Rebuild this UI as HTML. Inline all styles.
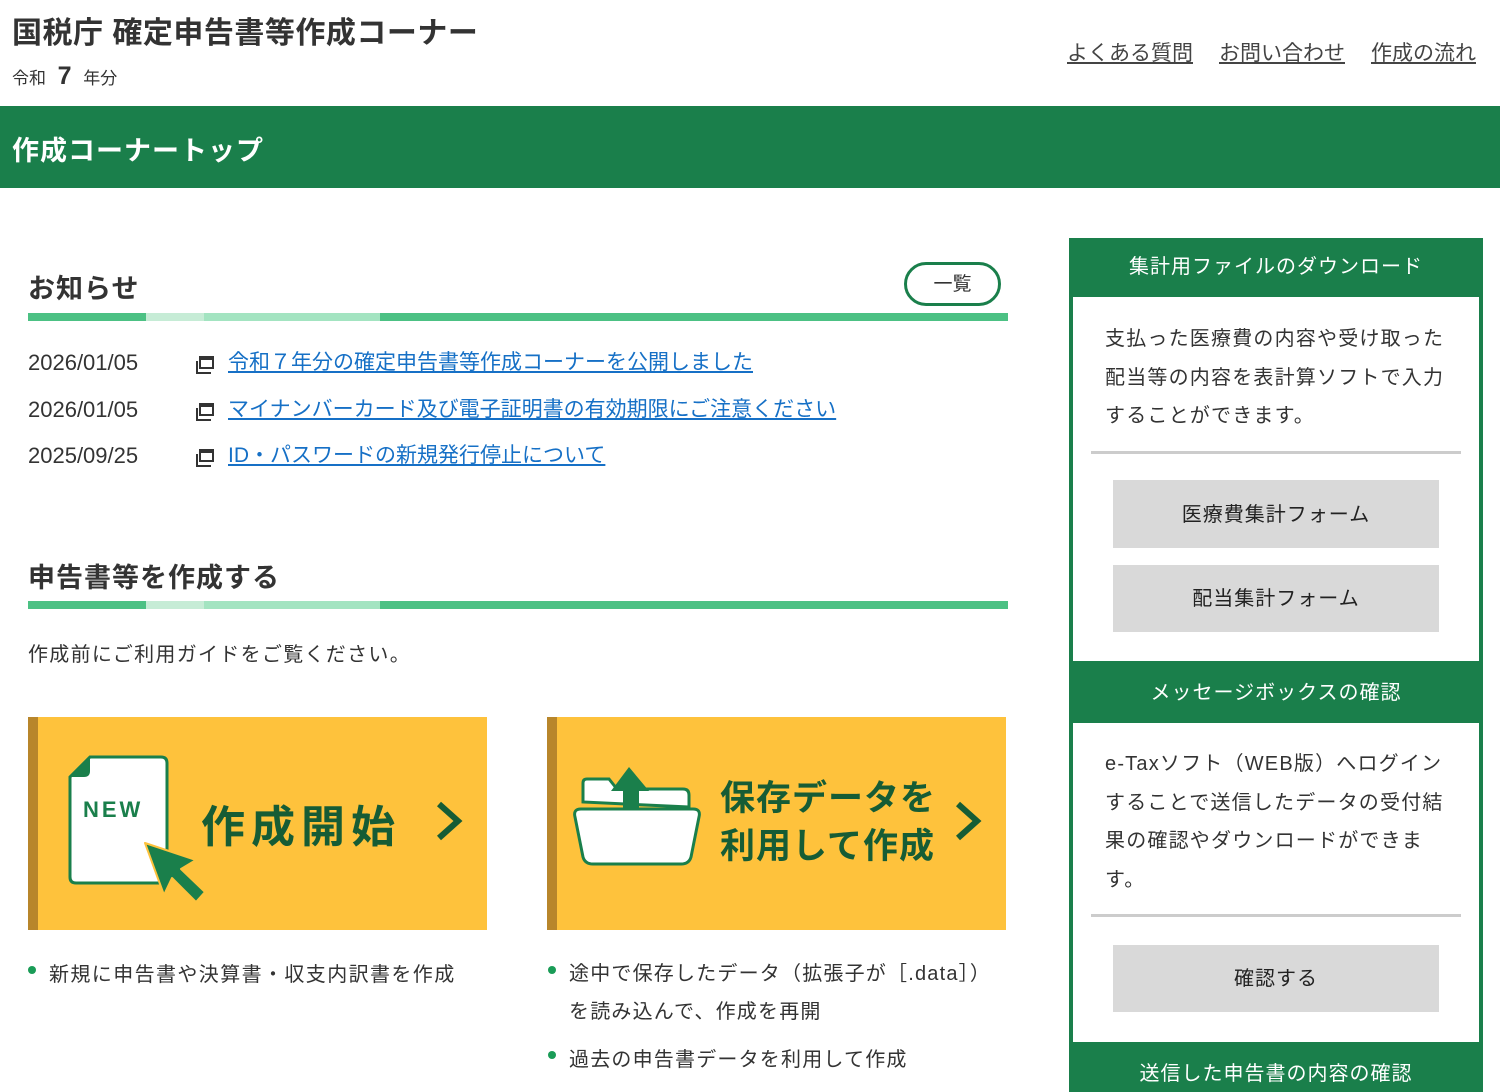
<!DOCTYPE html>
<html><head><meta charset="utf-8"><style>
*{margin:0;padding:0;box-sizing:border-box}
html,body{width:1500px;height:1092px;overflow:hidden}
body{background:#fff;font-family:"Liberation Sans","Noto Sans CJK JP",sans-serif;color:#333;position:relative}
.a{position:absolute;white-space:nowrap}
.bar{position:absolute;height:8px;left:28px;width:980px;background:linear-gradient(90deg,#4cc184 0 118px,#c6ecd6 118px 176px,#a3e4c1 176px 352px,#4cc184 352px)}
.news{font-size:21px;line-height:28px}
.news a{color:#1670c6;text-decoration:underline}
.ico{position:absolute;width:15px;height:13px;border:2px solid #333;border-top-width:4px;background:#fff}
.ico:before{content:"";position:absolute;left:-5px;top:1px;width:13px;height:11px;border-left:2px solid #333;border-bottom:2px solid #333}
.card{position:absolute;top:717px;width:459px;height:213px;background:#fec23c;border-left:10px solid #b8862b}
.side{position:absolute;left:1069px;top:238px;width:414px;height:860px;border:4px solid #1a7f4b;border-top:0}
.sh{position:absolute;left:1069px;width:414px;background:#1a7f4b;color:#fff;font-size:20px;text-align:center;letter-spacing:1px}
.btn{position:absolute;left:1113px;width:326px;background:#d9d9d9;font-size:20px;text-align:center;color:#222;letter-spacing:1px}
.hr{position:absolute;left:1091px;width:370px;height:3px;background:#ccc}
.st{position:absolute;left:1105px;font-size:20px;line-height:38.5px;color:#333;letter-spacing:1.2px}
.dot{position:absolute;width:8px;height:8px;border-radius:50%;background:#1a9c57}
</style></head><body>
<div class="a" style="left:12px;top:8px;font-size:30px;font-weight:bold;color:#333;letter-spacing:0.5px">国税庁 確定申告書等作成コーナー</div>
<div class="a" style="left:12px;top:62px;font-size:17px">令和 <span style="font-size:25px;font-weight:bold">&nbsp;7&nbsp;</span> 年分</div>
<div class="a" style="left:1067px;top:37px;font-size:21px;color:#444"><u>よくある質問</u><span style="display:inline-block;width:26px"></span><u>お問い合わせ</u><span style="display:inline-block;width:26px"></span><u>作成の流れ</u></div>
<div class="a" style="left:0;top:106px;width:1500px;height:82px;background:#1a7f4b"></div>
<div class="a" style="left:12px;top:129px;font-size:27px;font-weight:bold;color:#fff;letter-spacing:1px">作成コーナートップ</div>

<div class="a" style="left:28px;top:267px;font-size:27px;font-weight:bold;letter-spacing:1px">お知らせ</div>
<div class="a" style="left:904px;top:262px;width:97px;height:44px;border:3px solid #1a7f4b;border-radius:22px;font-size:19px;text-align:center;line-height:40px">一覧</div>
<div class="bar" style="top:313px"></div>
<div class="a news" style="left:28px;top:349px;font-size:22px">2026/01/05</div>
<div class="ico" style="left:199px;top:356px"></div>
<div class="a news" style="left:228px;top:349px"><a>令和７年分の確定申告書等作成コーナーを公開しました</a></div>
<div class="a news" style="left:28px;top:396px;font-size:22px">2026/01/05</div>
<div class="ico" style="left:199px;top:403px"></div>
<div class="a news" style="left:228px;top:396px"><a>マイナンバーカード及び電子証明書の有効期限にご注意ください</a></div>
<div class="a news" style="left:28px;top:442px;font-size:22px">2025/09/25</div>
<div class="ico" style="left:199px;top:449px"></div>
<div class="a news" style="left:228px;top:442px"><a>ID・パスワードの新規発行停止について</a></div>

<div class="a" style="left:28px;top:556px;font-size:27px;font-weight:bold;letter-spacing:1px">申告書等を作成する</div>
<div class="bar" style="top:601px"></div>
<div class="a" style="left:28px;top:638px;font-size:20px;letter-spacing:1.3px">作成前にご利用ガイドをご覧ください。</div>

<div class="card" style="left:28px">
<svg style="position:absolute;left:28px;top:36px" width="160" height="160" viewBox="0 0 160 160">
<path d="M24 4 H95 Q101 4 101 10 V124 Q101 130 95 130 H10 Q4 130 4 124 V24 Z" fill="#fff" stroke="#1a7f4b" stroke-width="3"/>
<path d="M24 4 V18 Q24 24 18 24 H4 Z" fill="#1a7f4b"/>
<text x="17" y="64" font-family="Liberation Sans,sans-serif" font-weight="bold" font-size="22" fill="#1a7f4b" letter-spacing="3">NEW</text>
<path d="M79 90 L130 107 L115 116 L139 139 L130 149 L106 125 L98 142 Z" fill="#1a7f4b" stroke="#fec23c" stroke-width="2" stroke-linejoin="round"/>
</svg>
<div class="a" style="left:163px;top:74px;font-size:44px;font-weight:bold;color:#165c35;letter-spacing:6px">作成開始</div>
<svg style="position:absolute;left:396px;top:84px" width="30" height="40" viewBox="0 0 30 40"><path d="M5 3 L24 20 L5 37" fill="none" stroke="#165c35" stroke-width="6"/></svg>
</div>
<div class="card" style="left:547px">
<svg style="position:absolute;left:14px;top:50px" width="135" height="100" viewBox="0 0 135 100">
<path d="M12 35 V16 Q12 12 16 12 H38 L46 22 H112 Q118 22 118 28 V40 Z" fill="#fff" stroke="#1a7f4b" stroke-width="3"/>
<path d="M4 50 Q2 42 10 42 H122 Q130 42 128 50 L120 90 Q118 97 110 97 H22 Q14 97 12 90 Z" fill="#fff" stroke="#1a7f4b" stroke-width="3"/>
<path d="M58 0 L78 24 H68 V42 H52 V24 H40 Z" fill="#1a7f4b"/>
</svg>
<div class="a" style="left:163px;top:58px;font-size:35px;font-weight:bold;color:#165c35;line-height:48px;letter-spacing:1px">保存データを<br>利用して作成</div>
<div style="position:absolute;left:396px;top:84px"><svg width="30" height="40" viewBox="0 0 30 40"><path d="M5 3 L24 20 L5 37" fill="none" stroke="#165c35" stroke-width="6"/></svg></div>
</div>

<div class="dot" style="left:28px;top:966px"></div>
<div class="a" style="left:49px;top:958px;font-size:20px;letter-spacing:1.4px">新規に申告書や決算書・収支内訳書を作成</div>
<div class="dot" style="left:548px;top:966px"></div>
<div class="a" style="left:569px;top:955px;font-size:20px;line-height:38px;letter-spacing:1.2px">途中で保存したデータ（拡張子が［.data］）<br>を読み込んで、作成を再開</div>
<div class="dot" style="left:548px;top:1051px"></div>
<div class="a" style="left:569px;top:1043px;font-size:20px;letter-spacing:1.2px">過去の申告書データを利用して作成</div>

<div class="side"></div>
<div class="sh" style="top:238px;height:59px;line-height:59px">集計用ファイルのダウンロード</div>
<div class="st" style="top:320px">支払った医療費の内容や受け取った<br>配当等の内容を表計算ソフトで入力<br>することができます。</div>
<div class="hr" style="top:451px"></div>
<div class="btn" style="top:480px;height:68px;line-height:70px">医療費集計フォーム</div>
<div class="btn" style="top:565px;height:67px;line-height:69px">配当集計フォーム</div>
<div class="sh" style="top:661px;height:62px;line-height:64px">メッセージボックスの確認</div>
<div class="st" style="top:745px">e-Taxソフト（WEB版）へログイン<br>することで送信したデータの受付結<br>果の確認やダウンロードができま<br>す。</div>
<div class="hr" style="top:914px"></div>
<div class="btn" style="top:945px;height:67px;line-height:69px">確認する</div>
<div class="sh" style="top:1042px;height:60px;line-height:64px">送信した申告書の内容の確認</div>
</body></html>
